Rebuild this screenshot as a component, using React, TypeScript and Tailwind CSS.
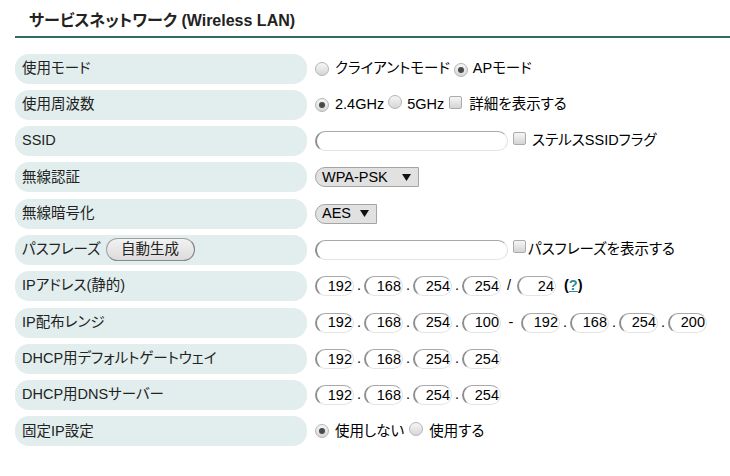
import React from "react";

const Radio = ({ checked }: { checked?: boolean }) => (
  <span className="inline-flex items-center justify-center w-[14px] h-[14px] rounded-full border border-[#b4b4b4] bg-gradient-to-b from-[#f6f6f6] to-[#d6d6d6] shrink-0">
    {checked && <span className="w-[6px] h-[6px] rounded-full bg-[#4a4a4a]" />}
  </span>
);

const Check = () => (
  <span className="inline-block w-[13px] h-[13px] rounded-[2px] border border-[#ababab] bg-gradient-to-b from-[#f6f6f6] to-[#d4d4d4] shrink-0" />
);

const Field = ({ v, w = 39 }: { v?: string; w?: number }) => (
  <span
    className="inline-flex items-center justify-end h-[20px] rounded-full border border-t-[#a9a9a9] border-l-2 border-l-[#8f8f8f] border-b-[#e4e4e4] border-r-[#e0e0e0] pr-[1px] text-[14.5px] leading-none text-black shrink-0 bg-white"
    style={{ width: w }}
  >
    {v}
  </span>
);

const Select = ({ label, w }: { label: string; w: number }) => (
  <span
    className="inline-flex items-center justify-between h-[20px] border border-[#a5a5a5] rounded-l-[10px] bg-[#e1e1e1] pl-[6px] pr-[7px] text-[14.5px] text-black"
    style={{ width: w }}
  >
    <span>{label}</span>
    <svg width="9" height="7" viewBox="0 0 9 7">
      <path d="M0 0 H9 L4.5 7 Z" fill="#111" />
    </svg>
  </span>
);

const Dot = ({ c = "." }: { c?: string }) => (
  <span className="inline-block w-[10px] text-center text-[14.5px] text-black">{c}</span>
);

const Ip = ({ parts }: { parts: string[] }) => (
  <>
    {parts.map((p, i) => (
      <React.Fragment key={i}>
        {i > 0 && <Dot />}
        <Field v={p} />
      </React.Fragment>
    ))}
  </>
);

const Row = ({ label, children }: { label: React.ReactNode; children: React.ReactNode }) => (
  <div className="flex items-center h-[30px]">
    <div className="w-[292px] h-[30px] rounded-[14px] bg-[#e1eeed] flex items-center pl-[7px] text-[14.5px] text-[#222] shrink-0">
      {label}
    </div>
    <div className="ml-[8px] flex items-center text-[14.5px] text-black">{children}</div>
  </div>
);

export default function App() {
  return (
    <div className="w-[730px] h-[476px] bg-white overflow-hidden font-['Liberation_Sans','Noto_Sans_CJK_JP',sans-serif] [font-feature-settings:'palt']">
      <div className="pt-[10px] pl-[29px] h-[36px] text-[16px] font-bold text-[#222] leading-[22px]">
        サービスネットワーク (Wireless LAN)
      </div>
      <div className="ml-[15px] h-[1.5px] bg-[#2f6b60]" />
      <div className="pl-[15px] pt-[16px] flex flex-col gap-[6.3px]">
        <Row label="使用モード">
          <Radio />
          <span className="ml-[6px]">クライアントモード</span>
          <span className="ml-[4px]"><Radio checked /></span>
          <span className="ml-[5px]">APモード</span>
        </Row>
        <Row label="使用周波数">
          <Radio checked />
          <span className="ml-[6px]">2.4GHz</span>
          <span className="ml-[4px]"><Radio /></span>
          <span className="ml-[5px]">5GHz</span>
          <span className="ml-[5px]"><Check /></span>
          <span className="ml-[7px]">詳細を表示する</span>
        </Row>
        <Row label="SSID">
          <Field w={193} />
          <span className="ml-[5px] -mt-[6px] flex"><Check /></span>
          <span className="ml-[6px]">ステルスSSIDフラグ</span>
        </Row>
        <Row label="無線認証">
          <Select label="WPA-PSK" w={104} />
        </Row>
        <Row label="無線暗号化">
          <Select label="AES" w={62} />
        </Row>
        <Row
          label={
            <>
              <span>パスフレーズ</span>
              <span className="ml-[5px] inline-flex items-center justify-center w-[89px] h-[23px] rounded-full border border-[#a0a0a0] border-r-[#7a7a7a] border-b-[#8a8a8a] bg-gradient-to-b from-[#f2f2f2] to-[#dcdcdc] text-[14.5px] text-[#222]">
                自動生成
              </span>
            </>
          }
        >
          <Field w={193} />
          <span className="ml-[5px] -mt-[6px] flex"><Check /></span>
          <span className="ml-[2px]">パスフレーズを表示する</span>
        </Row>
        <Row label="IPアドレス(静的)">
          <Ip parts={["192", "168", "254", "254"]} />
          <span className="inline-block w-[16px] text-center">/</span>
          <Field v="24" />
          <span className="ml-[8px] font-bold">
            (<span className="text-[#2a8c9b] underline">?</span>)
          </span>
        </Row>
        <Row label="IP配布レンジ">
          <Ip parts={["192", "168", "254", "100"]} />
          <span className="inline-block w-[20px] text-center">-</span>
          <Ip parts={["192", "168", "254", "200"]} />
        </Row>
        <Row label="DHCP用デフォルトゲートウェイ">
          <Ip parts={["192", "168", "254", "254"]} />
        </Row>
        <Row label="DHCP用DNSサーバー">
          <Ip parts={["192", "168", "254", "254"]} />
        </Row>
        <Row label="固定IP設定">
          <Radio checked />
          <span className="ml-[6px]">使用しない</span>
          <span className="ml-[5px]"><Radio /></span>
          <span className="ml-[6px]">使用する</span>
        </Row>
      </div>
    </div>
  );
}
